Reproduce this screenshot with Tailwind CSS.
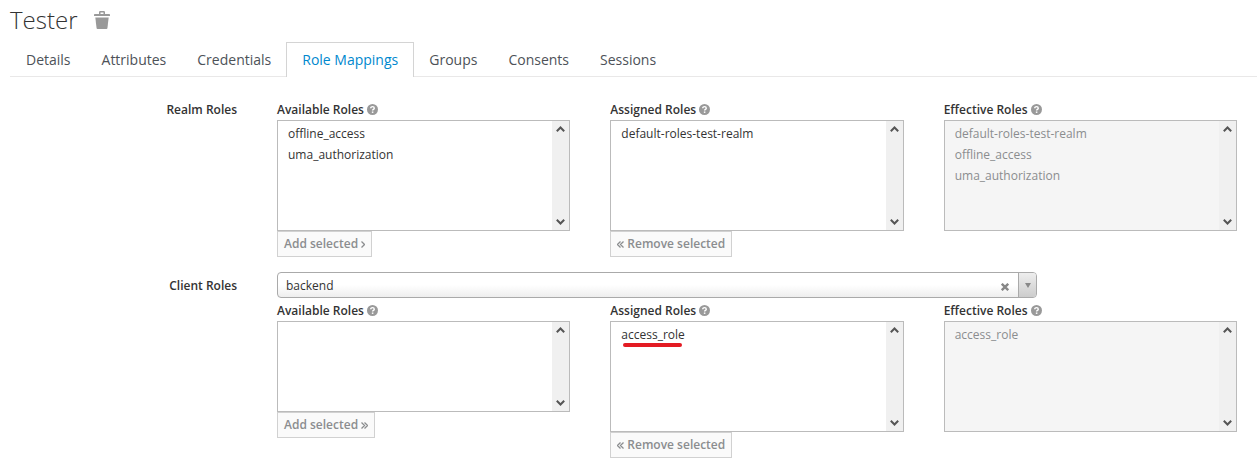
<!DOCTYPE html>
<html lang="en">
<head>
<meta charset="utf-8">
<title>Tester - Role Mappings</title>
<script src="https://cdn.jsdelivr.net/npm/@tailwindcss/browser@4"></script>
</head>
<body class="bg-white font-['Open_Sans','Noto_Sans',sans-serif] text-xs text-[#333]">
<svg class="hidden" aria-hidden="true">
  <symbol id="help" viewBox="0 0 10 10"><circle cx="5" cy="5" r="5" fill="#999"/><path d="M3.4 3.9C3.4 1.9 6.6 1.9 6.6 3.9C6.6 4.9 5.1 4.9 5.1 6" fill="none" stroke="#fff" stroke-width="1.3"/><rect x="4.4" y="6.8" width="1.4" height="1.3" fill="#fff"/></symbol>
  <symbol id="up" viewBox="0 0 9 6"><path d="M0.8 5.2L4.5 1.5L8.2 5.2" fill="none" stroke="#555" stroke-width="2"/></symbol>
  <symbol id="down" viewBox="0 0 9 6"><path d="M0.8 0.8L4.5 4.5L8.2 0.8" fill="none" stroke="#555" stroke-width="2"/></symbol>
</svg>

<header class="flex items-center gap-4 pl-2.5 pt-1">
  <h1 class="text-2xl font-light leading-8">Tester</h1>
  <button type="button" aria-label="Delete user">
    <svg class="h-[18px] w-4" viewBox="0 0 16 18" fill="#999"><path fill-rule="evenodd" d="M5 3V1.2Q5 0 6.2 0H9.8Q11 0 11 1.2V3H15.2Q16 3 16 3.8V5H0V3.8Q0 3 .8 3ZM6.5 3H9.5V1.4H6.5Z"/><path d="M1.3 6.5H14.7L13.4 17.2Q13.3 18 12.5 18H3.5Q2.7 18 2.6 17.2Z"/></svg>
  </button>
</header>

<nav class="ml-2.5 mt-1.5 border-b border-[#e9e8e8]">
  <ul class="-mb-px flex text-sm leading-[34px] text-[#4d5258]">
    <li class="-mr-px"><a href="#" class="-mb-px block border border-transparent px-[15px]">Details</a></li>
    <li class="-mr-px"><a href="#" class="-mb-px block border border-transparent px-[15px]">Attributes</a></li>
    <li class="-mr-px"><a href="#" class="-mb-px block border border-transparent px-[15px]">Credentials</a></li>
    <li class="-mr-px"><a href="#" aria-current="page" class="block border border-b-0 border-[#d4d4d4] bg-white px-[15px] text-[#0088ce]">Role Mappings</a></li>
    <li class="-mr-px"><a href="#" class="-mb-px block border border-transparent px-[15px]">Groups</a></li>
    <li class="-mr-px"><a href="#" class="-mb-px block border border-transparent px-[15px]">Consents</a></li>
    <li><a href="#" class="-mb-px block border border-transparent px-[15px]">Sessions</a></li>
  </ul>
</nav>

<main class="pl-2.5 pr-5 pb-4 pt-[22px]">
  <section class="flex gap-10">
    <h2 class="w-[227px] shrink-0 text-right font-semibold leading-[22px]">Realm Roles</h2>
    <div class="grid min-w-0 flex-1 grid-cols-3 items-start gap-x-10">
      <div>
        <div class="flex h-[21px] items-center gap-[3px]"><label for="ra" class="font-semibold">Available Roles</label><svg class="size-[11px]"><use href="#help"/></svg></div>
        <div class="flex h-[111px] border border-[#bbb] bg-white">
          <select id="ra" multiple class="min-w-0 flex-1 appearance-none overflow-hidden py-1 pl-2 outline-none"><option class="min-h-[21px] px-0.5 leading-[21px]">offline_access</option><option class="min-h-[21px] px-0.5 leading-[21px]">uma_authorization</option></select>
          <div class="flex w-[17px] flex-col items-center justify-between bg-[#f0f0f0] py-[5px]"><svg class="h-1.5 w-[9px]"><use href="#up"/></svg><svg class="h-1.5 w-[9px]"><use href="#down"/></svg></div>
        </div>
        <button type="button" disabled class="flex h-[26px] items-center gap-[3px] border border-[#d1d1d1] bg-[#fafafa] px-1.5 font-semibold text-[#8b8d8f]">Add selected<svg class="h-[7px] w-1" viewBox="0 0 4 7" fill="none" stroke="currentColor" stroke-width="1.3"><path d="M.5 .5L3.5 3.5L.5 6.5"/></svg></button>
      </div>
      <div>
        <div class="flex h-[21px] items-center gap-[3px]"><label for="rs" class="font-semibold">Assigned Roles</label><svg class="size-[11px]"><use href="#help"/></svg></div>
        <div class="flex h-[111px] border border-[#bbb] bg-white">
          <select id="rs" multiple class="min-w-0 flex-1 appearance-none overflow-hidden py-1 pl-2 outline-none"><option class="min-h-[21px] px-0.5 leading-[21px]">default-roles-test-realm</option></select>
          <div class="flex w-[17px] flex-col items-center justify-between bg-[#f0f0f0] py-[5px]"><svg class="h-1.5 w-[9px]"><use href="#up"/></svg><svg class="h-1.5 w-[9px]"><use href="#down"/></svg></div>
        </div>
        <button type="button" disabled class="flex h-[26px] items-center gap-[3px] border border-[#d1d1d1] bg-[#fafafa] px-1.5 font-semibold text-[#8b8d8f]"><svg class="h-[7px] w-[7px]" viewBox="0 0 7 7" fill="none" stroke="currentColor" stroke-width="1.3"><path d="M3.5 .5L.5 3.5L3.5 6.5M6.5 .5L3.5 3.5L6.5 6.5"/></svg>Remove selected</button>
      </div>
      <div>
        <div class="flex h-[21px] items-center gap-[3px]"><label for="re" class="font-semibold">Effective Roles</label><svg class="size-[11px]"><use href="#help"/></svg></div>
        <div class="flex h-[111px] border border-[#bbb] bg-[#f5f5f5]">
          <select id="re" multiple disabled class="min-w-0 flex-1 appearance-none overflow-hidden py-1 pl-2 text-[#8b8d8f] opacity-100 outline-none"><option class="min-h-[21px] px-0.5 leading-[21px] text-[#8b8d8f]">default-roles-test-realm</option><option class="min-h-[21px] px-0.5 leading-[21px] text-[#8b8d8f]">offline_access</option><option class="min-h-[21px] px-0.5 leading-[21px] text-[#8b8d8f]">uma_authorization</option></select>
          <div class="flex w-[17px] flex-col items-center justify-between bg-[#f0f0f0] py-[5px]"><svg class="h-1.5 w-[9px]"><use href="#up"/></svg><svg class="h-1.5 w-[9px]"><use href="#down"/></svg></div>
        </div>
      </div>
    </div>
  </section>

  <section class="mt-[15px] flex gap-10">
    <label for="client" class="block w-[227px] shrink-0 text-right font-semibold leading-7">Client Roles</label>
    <div class="min-w-0 flex-1">
      <div class="flex h-[26px] w-[760px] max-w-full overflow-hidden rounded border border-[#aaa] bg-linear-to-b from-white from-50% to-[#eee]">
        <select id="client" class="min-w-0 flex-1 appearance-none pl-2 pt-0.5 outline-none"><option>backend</option></select>
        <button type="button" aria-label="Clear client" class="flex w-[26px] items-center justify-center pt-1"><svg class="size-2" viewBox="0 0 8 8" stroke="#888" stroke-width="2.4"><path d="M.8 .8L7.2 7.2M7.2 .8L.8 7.2"/></svg></button>
        <span class="flex w-[18px] items-center justify-center border-l border-[#aaa] bg-linear-to-b from-[#eee] to-[#ccc]"><svg class="h-[5px] w-1.5" viewBox="0 0 6 5" fill="#888"><path d="M0 0H6L3 5Z"/></svg></span>
      </div>
      <div class="mt-0.5 grid grid-cols-3 items-start gap-x-10">
        <div>
          <div class="flex h-[21px] items-center gap-[3px]"><label for="ca" class="font-semibold">Available Roles</label><svg class="size-[11px]"><use href="#help"/></svg></div>
          <div class="flex h-[91px] border border-[#bbb] bg-white">
            <select id="ca" multiple class="min-w-0 flex-1 appearance-none overflow-hidden py-1 pl-2 outline-none"></select>
            <div class="flex w-[17px] flex-col items-center justify-between bg-[#f0f0f0] py-[5px]"><svg class="h-1.5 w-[9px]"><use href="#up"/></svg><svg class="h-1.5 w-[9px]"><use href="#down"/></svg></div>
          </div>
          <button type="button" disabled class="flex h-[26px] items-center gap-[3px] border border-[#d1d1d1] bg-[#fafafa] px-1.5 font-semibold text-[#8b8d8f]">Add selected<svg class="h-[7px] w-[7px]" viewBox="0 0 7 7" fill="none" stroke="currentColor" stroke-width="1.3"><path d="M.5 .5L3.5 3.5L.5 6.5M3.5 .5L6.5 3.5L3.5 6.5"/></svg></button>
        </div>
        <div>
          <div class="flex h-[21px] items-center gap-[3px]"><label for="cs" class="font-semibold">Assigned Roles</label><svg class="size-[11px]"><use href="#help"/></svg></div>
          <div class="relative flex h-[111px] border border-[#bbb] bg-white">
            <select id="cs" multiple class="min-w-0 flex-1 appearance-none overflow-hidden py-1 pl-2 outline-none"><option class="min-h-[21px] px-0.5 leading-[21px]">access_role</option></select>
            <div class="flex w-[17px] flex-col items-center justify-between bg-[#f0f0f0] py-[5px]"><svg class="h-1.5 w-[9px]"><use href="#up"/></svg><svg class="h-1.5 w-[9px]"><use href="#down"/></svg></div>
            <span class="pointer-events-none absolute left-3 top-[21px] h-1 w-[59px] rounded-full bg-[#e31b23]"></span>
          </div>
          <button type="button" disabled class="flex h-[26px] items-center gap-[3px] border border-[#d1d1d1] bg-[#fafafa] px-1.5 font-semibold text-[#8b8d8f]"><svg class="h-[7px] w-[7px]" viewBox="0 0 7 7" fill="none" stroke="currentColor" stroke-width="1.3"><path d="M3.5 .5L.5 3.5L3.5 6.5M6.5 .5L3.5 3.5L6.5 6.5"/></svg>Remove selected</button>
        </div>
        <div>
          <div class="flex h-[21px] items-center gap-[3px]"><label for="ce" class="font-semibold">Effective Roles</label><svg class="size-[11px]"><use href="#help"/></svg></div>
          <div class="flex h-[111px] border border-[#bbb] bg-[#f5f5f5]">
            <select id="ce" multiple disabled class="min-w-0 flex-1 appearance-none overflow-hidden py-1 pl-2 text-[#8b8d8f] opacity-100 outline-none"><option class="min-h-[21px] px-0.5 leading-[21px] text-[#8b8d8f]">access_role</option></select>
            <div class="flex w-[17px] flex-col items-center justify-between bg-[#f0f0f0] py-[5px]"><svg class="h-1.5 w-[9px]"><use href="#up"/></svg><svg class="h-1.5 w-[9px]"><use href="#down"/></svg></div>
          </div>
        </div>
      </div>
    </div>
  </section>
</main>
</body>
</html>
